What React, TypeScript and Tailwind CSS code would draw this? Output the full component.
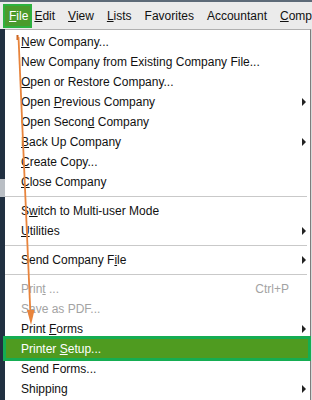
import { ReactNode } from 'react';

type Item =
  | { sep: true }
  | {
      sep?: false;
      label: ReactNode;
      sub?: boolean;
      disabled?: boolean;
      shortcut?: string;
      active?: boolean;
    };

const items: Item[] = [
  { label: <><u>N</u>ew Company...</> },
  { label: 'New Company from Existing Company File...' },
  { label: <><u>O</u>pen or Restore Company...</> },
  { label: <>Open <u>P</u>revious Company</>, sub: true },
  { label: <>Open Secon<u>d</u> Company</> },
  { label: <><u>B</u>ack Up Company</>, sub: true },
  { label: <><u>C</u>reate Copy...</> },
  { label: <><u>C</u>lose Company</> },
  { sep: true },
  { label: <>S<u>w</u>itch to Multi-user Mode</> },
  { label: <><u>U</u>tilities</>, sub: true },
  { sep: true },
  { label: <>Send Company F<u>i</u>le</>, sub: true },
  { sep: true },
  { label: <>Prin<u>t</u> ...</>, disabled: true, shortcut: 'Ctrl+P' },
  { label: 'Save as PDF...', disabled: true },
  { label: <>Print <u>F</u>orms</>, sub: true },
  { label: <>Printer <u>S</u>etup...</>, active: true },
  { label: 'Send Forms...' },
  { label: 'Shipping', sub: true },
];

const menuBar = ['Edit', 'View', 'Lists', 'Favorites', 'Accountant', 'Comp'];
const mnemonic: Record<string, boolean> = { Edit: true, View: true, Lists: true, Comp: true };

function Arrow() {
  return <span className="ml-auto mr-[4px] w-0 h-0 border-y-[4px] border-y-transparent border-l-[4px] border-l-[#222]" />;
}

export default function App() {
  return (
    <div
      className="relative w-[312px] h-[400px] overflow-hidden bg-[#213041] text-[12px] text-[#111]"
      style={{ fontFamily: '"Liberation Sans", Arial, sans-serif' }}
    >
      <header className="flex items-center h-[29px] pl-[3px] gap-[13px] bg-[#ebebeb] border-t-2 border-[#5d6a78]">
        <div className="flex items-center h-[24px] w-[33px] pl-[4px] bg-[#4a9b2c] border-2 border-[#2db13f] text-white">
          <u>F</u>ile
        </div>
        <div className="flex gap-[13px] -ml-[11px]">
          {menuBar.map((m) => (
            <span key={m}>
              {mnemonic[m] ? (
                <>
                  <u>{m[0]}</u>
                  {m.slice(1)}
                </>
              ) : (
                m
              )}
            </span>
          ))}
        </div>
      </header>

      <div className="flex h-[371px]">
        <div className="w-[5px] flex flex-col">
          <div className="h-[150px]" />
          <div className="h-[18px] bg-[#b9bec4]" />
        </div>
        <div className="flex-1 flex flex-col bg-white border-t border-[#b0b0b0] border-r border-r-[#7d7d7d] pt-[2px]">
          {items.map((it, i) =>
            it.sep ? (
              <div key={i} className="h-[9px] flex items-center pr-[3px]">
                <div className="h-px w-full bg-[#c9c9c9]" />
              </div>
            ) : (
              <div
                key={i}
                className={`relative flex items-center h-[20px] pl-[16px] shrink-0 ${
                  it.disabled ? 'text-[#a3a3a3]' : it.active ? 'text-white' : ''
                }`}
              >
                {it.active && (
                  <div className="absolute -left-[2px] -right-px -top-[3px] -bottom-[2px] bg-[#4f9b20] border-[3px] border-[#15ad52]" />
                )}
                <span className="relative whitespace-nowrap">{it.label}</span>
                {it.shortcut && <span className="ml-auto mr-[21px]">{it.shortcut}</span>}
                {it.sub && <Arrow />}
              </div>
            )
          )}
        </div>
        <div className="w-px bg-[#d8d8d8]" />
      </div>

      <svg className="absolute inset-0 pointer-events-none" width="312" height="400" viewBox="0 0 312 400">
        <line x1="17.5" y1="35" x2="17.5" y2="40" stroke="#c9621f" strokeWidth="2" />
        <line x1="18.5" y1="37" x2="30.5" y2="316" stroke="#e8843c" strokeWidth="1.8" />
        <polygon points="31,325 27,310 34.5,310" fill="#e8843c" />
      </svg>
    </div>
  );
}
